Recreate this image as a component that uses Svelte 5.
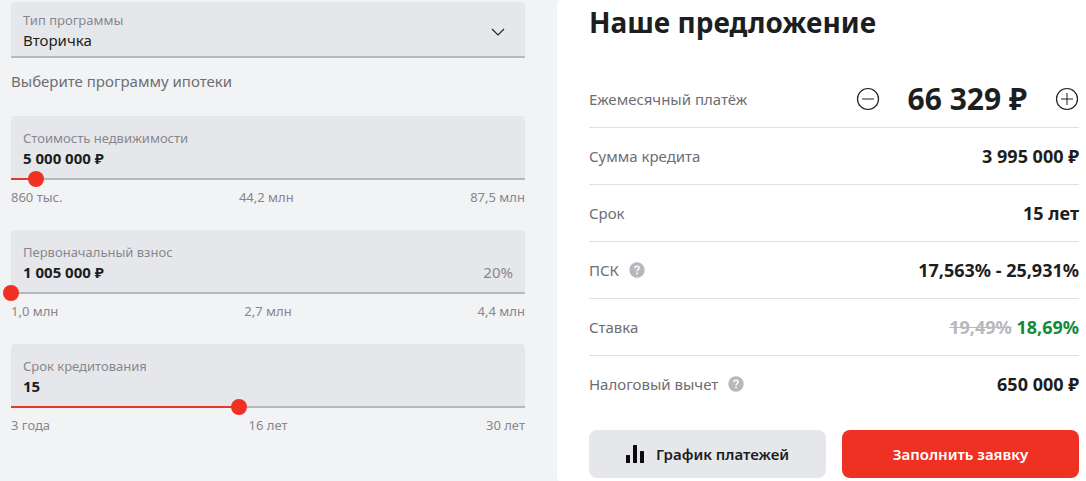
<script>
  let program = $state('Вторичка');
  let payment = $state(66329);

  let sliders = $state([
    {
      id: 'price',
      label: 'Стоимость недвижимости',
      min: 860000,
      max: 87500000,
      step: 10000,
      value: 5000000,
      unit: ' ₽',
      ticks: ['860 тыс.', '44,2 млн', '87,5 млн']
    },
    {
      id: 'deposit',
      label: 'Первоначальный взнос',
      min: 1005000,
      max: 4400000,
      step: 5000,
      value: 1005000,
      unit: ' ₽',
      note: '20%',
      ticks: ['1,0 млн', '2,7 млн', '4,4 млн']
    },
    {
      id: 'term',
      label: 'Срок кредитования',
      min: 3,
      max: 30,
      step: 1,
      value: 15,
      unit: '',
      ticks: ['3 года', '16 лет', '30 лет']
    }
  ]);

  const rows = [
    { name: 'Сумма кредита', value: '3 995 000 ₽' },
    { name: 'Срок', value: '15 лет' },
    { name: 'ПСК', value: '17,563% - 25,931%', help: true },
    { name: 'Ставка', value: '18,69%', old: '19,49%' },
    { name: 'Налоговый вычет', value: '650 000 ₽', help: true }
  ];

  function format(n) {
    return String(n).replace(/\B(?=(\d{3})+$)/g, ' ');
  }

  function parse(slider, text) {
    const n = Number(text.replace(/\D/g, ''));
    slider.value = Math.min(slider.max, Math.max(slider.min, n));
  }

  function share(s) {
    return (s.value - s.min) / (s.max - s.min);
  }
</script>

<main>
  <form class="params" onsubmit={(e) => e.preventDefault()}>
    <div class="field select">
      <label for="program">Тип программы</label>
      <select id="program" bind:value={program}>
        <option>Вторичка</option>
        <option>Новостройка</option>
        <option>Рефинансирование</option>
      </select>
      <svg class="chevron" width="14" height="8" viewBox="0 0 14 8" fill="none" stroke="#1d1e22" stroke-width="1.1">
        <path d="M1 1l6 6 6-6" />
      </svg>
    </div>
    <p class="hint">Выберите программу ипотеки</p>

    {#each sliders as s (s.id)}
      <div class="slider">
        <div class="field">
          <label for={s.id}>{s.label}</label>
          <div class="line">
            <input
              id={s.id}
              type="text"
              value={format(s.value) + s.unit}
              onchange={(e) => parse(s, e.target.value)}
            />
            {#if s.note}<span class="note">{s.note}</span>{/if}
          </div>
        </div>
        <input
          class="range"
          type="range"
          aria-label={s.label}
          min={s.min}
          max={s.max}
          step={s.step}
          bind:value={s.value}
          style="--share: {share(s)}"
        />
        <div class="ticks">
          {#each s.ticks as tick}<span>{tick}</span>{/each}
        </div>
      </div>
    {/each}
  </form>

  <section class="offer">
    <h2>Наше предложение</h2>
    <dl>
      <div class="row">
        <dt>Ежемесячный платёж</dt>
        <dd class="payment">
          <button type="button" class="round" aria-label="Уменьшить" onclick={() => (payment -= 1000)}>
            <svg width="24" height="24" viewBox="0 0 24 24" fill="none" stroke="#1d1e22">
              <circle cx="12" cy="12" r="10.5" stroke-width="1.2" />
              <path d="M6 12h12" />
            </svg>
          </button>
          <span>{format(payment)} ₽</span>
          <button type="button" class="round" aria-label="Увеличить" onclick={() => (payment += 1000)}>
            <svg width="24" height="24" viewBox="0 0 24 24" fill="none" stroke="#1d1e22">
              <circle cx="12" cy="12" r="10.5" stroke-width="1.2" />
              <path d="M6 12h12M12 6v12" />
            </svg>
          </button>
        </dd>
      </div>
      {#each rows as row}
        <div class="row">
          <dt>
            {row.name}
            {#if row.help}
              <button type="button" class="help" aria-label="Подсказка">
                <svg width="16" height="16" viewBox="0 0 16 16" fill="none">
                  <circle cx="8" cy="8" r="7.7" fill="#b7b7c0" />
                  <path d="M5.8 6.3c0-1.3 1-2.100 2.200-2.100s2.200.8 2.200 1.900c0 1.500-2.200 1.500-2.200 3.200" stroke="#fff" stroke-width="1.5" />
                  <circle cx="8" cy="11.5" r="1" fill="#fff" />
                </svg>
              </button>
            {/if}
          </dt>
          <dd>
            {#if row.old}
              <del>{row.old}</del> <span class="good">{row.value}</span>
            {:else}
              {row.value}
            {/if}
          </dd>
        </div>
      {/each}
    </dl>
    <div class="actions">
      <button type="button" class="btn">
        <svg width="18" height="18" viewBox="0 0 18 18" fill="#0b0b0d">
          <rect x="0" y="10" width="4" height="8" rx="0.5" />
          <rect x="7" y="0" width="4" height="18" rx="0.5" />
          <rect x="14" y="6" width="4" height="12" rx="0.5" />
        </svg>
        График платежей
      </button>
      <button type="button" class="btn primary">Заполнить заявку</button>
    </div>
  </section>
</main>

<style>
  :global(body) {
    background: #f2f3f5;
    font-family: 'Noto Sans', 'Open Sans', sans-serif;
    color: #1d1e20;
  }

  main {
    display: grid;
    grid-template-columns: minmax(0, 34fr) minmax(0, 35fr);
    gap: 32px;
    min-height: 100vh;
    padding-left: 11px;
    box-sizing: border-box;
  }

  .params {
    padding-top: 2px;
  }

  .field {
    position: relative;
    box-sizing: border-box;
    height: 64px;
    padding: 12px 12px 0;
    background: #e6e7eb;
    border-bottom: 2px solid #b7b8be;
    border-radius: 4px 4px 0 0;
  }

  .field.select {
    height: 56px;
    padding-top: 8px;
  }

  .field label {
    display: block;
    font-size: 13px;
    line-height: 20px;
    color: #86878d;
  }

  .field select,
  .field input {
    display: block;
    width: 100%;
    height: 20px;
    margin: 0;
    padding: 0;
    border: none;
    outline: none;
    background: none;
    appearance: none;
    font-family: inherit;
    font-size: 15px;
    line-height: 20px;
    color: inherit;
  }

  .field input {
    flex: 1;
    min-width: 0;
    font-weight: 700;
  }

  .chevron {
    position: absolute;
    top: 26px;
    right: 20px;
    pointer-events: none;
  }

  .hint {
    margin: 11px 0 23px;
    font-size: 15px;
    line-height: 24px;
    color: #6d6e73;
  }

  .line {
    display: flex;
    align-items: center;
  }

  .note {
    font-size: 15px;
    line-height: 20px;
    color: #86878d;
  }

  .slider {
    height: 114px;
  }

  /* the thumb centre travels the exact width of the field */
  .range {
    position: relative;
    display: block;
    width: calc(100% + 16px);
    height: 16px;
    margin: -9px -8px 0;
    appearance: none;
    cursor: pointer;
    background: none;
  }

  .range::-webkit-slider-runnable-track {
    height: 2px;
    background: linear-gradient(
      to right,
      transparent 8px,
      #e03a30 8px,
      #e03a30 calc(8px + (100% - 16px) * var(--share)),
      transparent 0
    );
  }

  .range::-webkit-slider-thumb {
    appearance: none;
    width: 16px;
    height: 16px;
    margin-top: -7px;
    border-radius: 50%;
    background: #ef3124;
  }

  .ticks {
    display: flex;
    justify-content: space-between;
    font-size: 13px;
    line-height: 20px;
    color: #86878d;
  }

  .offer {
    padding: 0 7px 0 32px;
    background: #fff;
    border-radius: 4px 0 0 4px;
  }

  h2 {
    margin: 0;
    font-size: 28px;
    line-height: 44px;
    font-weight: 700;
  }

  dl {
    margin: 27px 0 0;
  }

  .row {
    display: flex;
    align-items: center;
    justify-content: space-between;
    height: 56px;
    border-bottom: 1px solid #e0e0e3;
  }

  .row:last-child {
    border-bottom: none;
  }

  dt {
    display: flex;
    align-items: center;
    gap: 10px;
    font-size: 15px;
    line-height: 24px;
    color: #6d6e73;
  }

  dd {
    margin: 0;
    font-size: 18px;
    line-height: 24px;
    font-weight: 700;
  }

  .payment {
    display: flex;
    align-items: center;
    gap: 28px;
    font-size: 30px;
    line-height: 32px;
  }

  .round,
  .help {
    display: flex;
    padding: 0;
    border: none;
    background: none;
    cursor: pointer;
  }

  del {
    color: #b7b8be;
  }

  .good {
    color: #13893b;
  }

  .actions {
    display: grid;
    grid-template-columns: 1fr 1fr;
    gap: 16px;
    margin-top: 18px;
  }

  .btn {
    display: flex;
    align-items: center;
    justify-content: center;
    gap: 12px;
    height: 48px;
    border: none;
    border-radius: 8px;
    background: #e6e7eb;
    color: inherit;
    font-family: inherit;
    font-size: 15px;
    font-weight: 600;
    cursor: pointer;
  }

  .primary {
    background: #ef3124;
    color: #fff;
  }
</style>
